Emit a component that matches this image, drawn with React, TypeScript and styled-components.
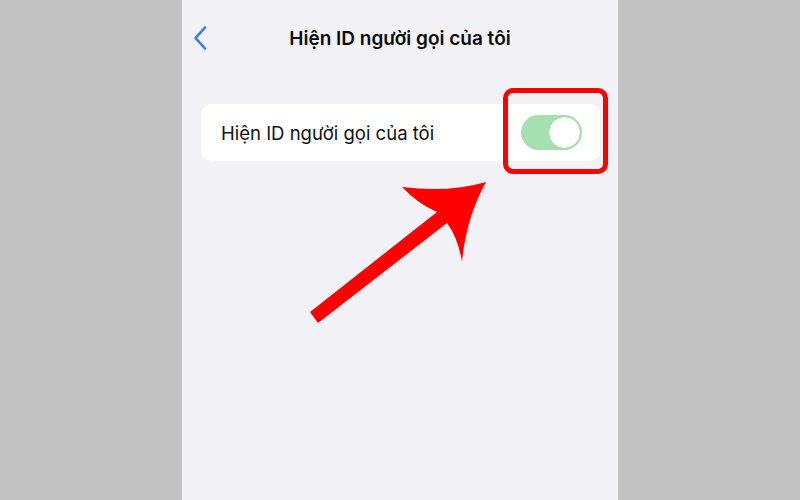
import React from "react";
import styled, { createGlobalStyle } from "styled-components";

const Global = createGlobalStyle`
  html, body { margin: 0; padding: 0; }
  body { width: 800px; height: 500px; overflow: hidden; font-family: Inter, "Noto Sans", "Liberation Sans", sans-serif; }
`;

const Page = styled.div`
  position: relative;
  width: 800px;
  height: 500px;
  display: flex;
  background: #c2c2c2;
`;

const Side = styled.div`
  width: 182px;
  flex: 0 0 182px;
  background: #c2c2c2;
`;

const Screen = styled.div`
  flex: 1;
  background: #f2f2f6;
  display: flex;
  flex-direction: column;
`;

const Header = styled.div`
  position: relative;
  height: 76px;
  display: flex;
  align-items: center;
  justify-content: center;
`;

const Back = styled.div`
  position: absolute;
  left: 10px;
  top: 25px;
  width: 20px;
  height: 26px;
`;

const Title = styled.div`
  font-size: 19px;
  font-weight: 600;
  color: #0a0a0a;
  letter-spacing: 0;
`;

const Card = styled.div`
  margin: 28px 18px 0 19px;
  height: 57px;
  background: #ffffff;
  border-radius: 10px;
  display: flex;
  align-items: center;
  justify-content: space-between;
  padding: 0 18px 0 20px;
`;

const Label = styled.div`
  font-size: 18.5px;
  font-weight: 400;
  color: #111;
  letter-spacing: 0;
`;

const Switch = styled.div`
  position: relative;
  width: 61px;
  height: 35px;
  border-radius: 18px;
  background: #a6e0b0;
`;

const Knob = styled.div`
  position: absolute;
  right: 1px;
  top: 1px;
  width: 31px;
  height: 31px;
  border-radius: 50%;
  background: #fff;
  border: 1.5px solid #9ad8a6;
  box-sizing: content-box;
  margin-top: -0.5px;
`;

const Highlight = styled.div`
  position: absolute;
  left: 503px;
  top: 88px;
  width: 105px;
  height: 86px;
  box-sizing: border-box;
  border: 5px solid #ff0000;
  border-radius: 10px;
`;

const ArrowLayer = styled.svg`
  position: absolute;
  left: 0;
  top: 0;
  width: 800px;
  height: 500px;
  pointer-events: none;
`;

export default function App() {
  return (
    <>
      <Global />
      <Page>
        <Side />
        <Screen>
          <Header>
            <Back>
              <svg width="20" height="26" viewBox="0 0 20 26">
                <path d="M13 2.5 L3.5 13 L13 23.5" fill="none" stroke="#3478f6" strokeWidth="2.6" strokeLinecap="round" strokeLinejoin="round" />
              </svg>
            </Back>
            <Title>Hiện ID người gọi của tôi</Title>
          </Header>
          <Card>
            <Label>Hiện ID người gọi của tôi</Label>
            <Switch>
              <Knob />
            </Switch>
          </Card>
        </Screen>
        <Side />
        <Highlight />
        <ArrowLayer viewBox="0 0 800 500">
          <path
            d="M310 312 L437 212 Q418 204 402 187 Q448 193 486 182 Q466 218 462 262 Q458 238 447 223 L318 323 Z"
            fill="#ff0000"
          />
        </ArrowLayer>
      </Page>
    </>
  );
}
